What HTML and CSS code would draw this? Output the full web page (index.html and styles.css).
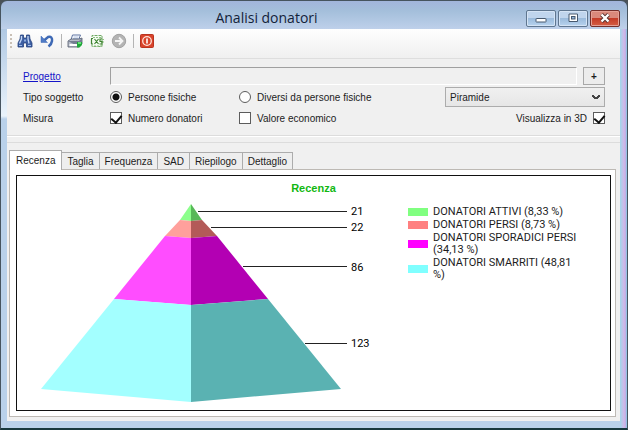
FILE: index.html
```html
<!DOCTYPE html>
<html lang="it">
<head>
  <meta charset="UTF-8" />
  <meta name="viewport" content="width=device-width, initial-scale=1.0" />
  <title>Analisi donatori</title>
  <link rel="stylesheet" href="styles.css">
</head>
<body>
  <div class="finestra">
    <!-- Barra del titolo -->
    <header class="titolo">
      <h1 class="titolo-testo">Analisi donatori</h1>
      <div class="titolo-bottoni">
        <button class="btn-finestra" type="button" aria-label="Riduci a icona">
          <svg width="12" height="10" viewBox="0 0 12 10"><rect x="1" y="5.5" width="10" height="3.5" rx="0.5" fill="#fff" stroke="#46586e"/></svg>
        </button>
        <button class="btn-finestra" type="button" aria-label="Ingrandisci">
          <svg width="12" height="10" viewBox="0 0 12 10"><path d="M2 1h8.500v7.500h-8.500z" fill="#fff" stroke="#46586e"/><rect x="4.500" y="3.500" width="3.500" height="2.500" fill="#8fb2d8" stroke="#46586e"/></svg>
        </button>
        <button class="btn-finestra btn-chiudi" type="button" aria-label="Chiudi">
          <svg width="12" height="10" viewBox="0 0 12 10"><path d="M2.500 1.500l7 7M9.500 1.500l-7 7" stroke="#54302f" stroke-width="4"/><path d="M2.500 1.500l7 7M9.500 1.500l-7 7" stroke="#fff" stroke-width="2.400"/></svg>
        </button>
      </div>
    </header>

    <main class="contenuto">
      <!-- Barra degli strumenti -->
      <div class="strumenti">
        <span class="maniglia"></span>
        <button class="btn-icona" type="button" aria-label="Cerca">
          <svg width="16" height="16" viewBox="0 0 16 16">
            <path d="M3.500 2h3v3h3v-3h3l.5 4 2 4v4h-5.500v-4h-3v4H1v-4l2-4z" fill="#3d5fa3" stroke="#27427d" stroke-width=".8"/>
            <path d="M4.500 3v3l-2 4.500M11 3v3l1 4.500" fill="none" stroke="#c4d7f6" stroke-width="1.300"/>
            <path d="M7 6.500h2v2H7z" fill="#8eabdd"/>
            <path d="M2 12.500h3M11 12.500h3" stroke="#9fbaea"/>
          </svg>
        </button>
        <button class="btn-icona" type="button" aria-label="Annulla">
          <svg width="16" height="16" viewBox="0 0 16 16">
            <path d="M5 7.500L9 4c3-1 4.500 1 4 4-.3 2.500-1.500 4-3.500 5.500" fill="none" stroke="#3e69b5" stroke-width="2.500"/>
            <path d="M2 3v6.500h6.500z" fill="#4f7bc6" stroke="#3e69b5" stroke-width=".5"/>
          </svg>
        </button>
        <span class="separatore"></span>
        <button class="btn-icona" type="button" aria-label="Stampa">
          <svg width="16" height="16" viewBox="0 0 16 16">
            <path d="M5.500 2h8l-2 5H4z" fill="#fff" stroke="#5d73a2"/>
            <path d="M6.500 4h5M6 5.500h5" stroke="#9cb3da" stroke-width=".8"/>
            <path d="M1 8l3-2h8l3-1v6l-3 3H1z" fill="#b7bdc9" stroke="#50586b" stroke-width=".8"/>
            <path d="M1 8h11l3-3v6l-3 3z" fill="#737d90"/>
            <path d="M2.500 11h8v2h-8z" fill="#fff"/>
            <path d="M10 9h5v3l-2.500 2.500H10z" fill="#1fa83a"/>
            <path d="M11 10h3" stroke="#7ff08b" stroke-width="1.500"/>
          </svg>
        </button>
        <button class="btn-icona" type="button" aria-label="Esporta in Excel">
          <svg width="16" height="16" viewBox="0 0 16 16">
            <path d="M3 4V2.500h10V13.500H3V12" fill="#f4fbf1" stroke="#6fa863" stroke-dasharray="3 1"/>
            <path d="M4 4.500h8M5 13h8M13 6.500h2M13 9h2" stroke="#8fbf83" stroke-dasharray="2 1"/>
            <path d="M2.500 6v5M2 5.500h2M2 11h2M5.500 6l4 5M9.500 6l-4 5M13 6h-2v2.500h2V11h-2.500" fill="none" stroke="#3e8431" stroke-width="1.200"/>
          </svg>
        </button>
        <button class="btn-icona" type="button" aria-label="Avanti" disabled>
          <svg width="16" height="16" viewBox="0 0 16 16">
            <circle cx="8" cy="8" r="6.700" fill="#b4b4b4" stroke="#a2a2a2"/>
            <path d="M4 8h7M8 4.500L11.500 8 8 11.500" fill="none" stroke="#f5f5f5" stroke-width="1.800"/>
          </svg>
        </button>
        <span class="separatore"></span>
        <button class="btn-icona" type="button" aria-label="Esci">
          <svg width="16" height="16" viewBox="0 0 16 16">
            <rect x="1.500" y="1.500" width="13" height="13" rx="1" fill="#d9432a" stroke="#b93420"/>
            <circle cx="8" cy="8" r="4.300" fill="#d9432a" stroke="#ffe3da" stroke-width="1.300"/>
            <path d="M8 5.500v5" stroke="#fff" stroke-width="1.600"/>
          </svg>
        </button>
      </div>

      <!-- Filtri -->
      <form class="filtri">
        <a class="link" href="#">Progetto</a>
        <div class="riga-progetto">
          <input class="campo" type="text" aria-label="Progetto" readonly>
          <button class="btn-piu" type="button">+</button>
        </div>

        <span>Tipo soggetto</span>
        <label class="scelta"><input class="radio" type="radio" name="tipo" checked>Persone fisiche</label>
        <label class="scelta"><input class="radio" type="radio" name="tipo">Diversi da persone fisiche</label>
        <select class="tendina" aria-label="Tipo di grafico">
          <option>Piramide</option>
        </select>

        <span>Misura</span>
        <label class="scelta"><input class="spunta" type="checkbox" checked>Numero donatori</label>
        <label class="scelta"><input class="spunta" type="checkbox">Valore economico</label>
        <label class="scelta scelta-destra">Visualizza in 3D<input class="spunta" type="checkbox" checked></label>
      </form>

      <!-- Schede -->
      <section class="schede">
        <div class="linguette" role="tablist">
          <button class="linguetta attiva" type="button" role="tab" aria-selected="true">Recenza</button>
          <button class="linguetta" type="button" role="tab">Taglia</button>
          <button class="linguetta" type="button" role="tab">Frequenza</button>
          <button class="linguetta" type="button" role="tab">SAD</button>
          <button class="linguetta" type="button" role="tab">Riepilogo</button>
          <button class="linguetta" type="button" role="tab">Dettaglio</button>
        </div>
        <div class="pannello">
          <div class="grafico">
            <h2 class="grafico-titolo">Recenza</h2>
            <div class="grafico-corpo">
              <svg class="piramide" width="340" height="204" viewBox="0 0 340 204">
                <polygon points="150,4 139,20 150,21" fill="#8cff8c"/>
                <polygon points="150,4 161,20 150,21" fill="#58b858"/>
                <polygon points="139,20 124,36 150,38 150,21" fill="#ffa09c"/>
                <polygon points="161,20 176,36 150,38 150,21" fill="#b35a58"/>
                <polygon points="124,36 73,99 150,105 150,38" fill="#ff4dff"/>
                <polygon points="176,36 227,99 150,105 150,38" fill="#b300b3"/>
                <polygon points="73,99 0,189 150,202 150,105" fill="#a3ffff"/>
                <polygon points="227,99 300,189 150,202 150,105" fill="#5ab2b2"/>
                <path class="linea" d="M157 11.500h149M170 27.500h136M202 66.500h104M264 143.500h42"/>
                <text x="310" y="15">21</text>
                <text x="310" y="31">22</text>
                <text x="310" y="71">86</text>
                <text x="310" y="147">123</text>
              </svg>
              <ul class="legenda">
                <li><span class="colore attivi"></span>DONATORI ATTIVI (8,33 %)</li>
                <li><span class="colore persi"></span>DONATORI PERSI (8,73 %)</li>
                <li><span class="colore sporadici"></span>DONATORI SPORADICI PERSI (34,13 %)</li>
                <li><span class="colore smarriti"></span>DONATORI SMARRITI (48,81 %)</li>
              </ul>
            </div>
          </div>
        </div>
      </section>
    </main>
  </div>
</body>
</html>
```
FILE: styles.css
```css
* {
  box-sizing: border-box;
  margin: 0;
  padding: 0;
}
body {
  background: #4a5158;
  font-family: "Liberation Sans", Arial, sans-serif;
  font-size: 10px;
  color: #1c1c1c;
}
button, input, select {
  font: inherit;
  color: inherit;
}

/* Finestra */
.finestra {
  display: flex;
  flex-direction: column;
  min-height: 100vh;
  padding: 1px 7px 7px 6px;
  border: 1px solid #46545f;
  border-bottom: 2px solid #17383d;
  border-radius: 7px 7px 0 0;
  background:
    linear-gradient(#a2b5dc, #a4bfdb 10px, #bed0ea 28px) top / 100% 28px no-repeat,
    linear-gradient(90deg, #a0d8ea, #d2b8e8 4px, #bcaee4 6px, #70d8e4) right / 7px 100% no-repeat,
    linear-gradient(#9dbbdc, #eaf3fb 115px, #b9d1ea 118px);
}
.titolo {
  display: flex;
  align-items: center;
  height: 27px;
  flex: none;
}
.titolo-testo {
  flex: 1;
  padding-top: 5px;
  text-align: center;
  font: 14px/18px "Open Sans", "Noto Sans", sans-serif;
  color: #13233a;
}
.titolo-bottoni {
  display: flex;
  gap: 2px;
  padding-top: 5px;
}
.btn-finestra {
  display: flex;
  align-items: center;
  justify-content: center;
  width: 30px;
  height: 17px;
  border: 1px solid #5f7690;
  border-radius: 2px;
  box-shadow: inset 0 0 0 1px #d5e4f5;
  background: linear-gradient(#c0d5ed 50%, #9bbbdc 50%, #b8d3ee);
}
.btn-chiudi {
  border-color: #742f2b;
  box-shadow: inset 0 0 0 1px #e5a196;
  background: linear-gradient(#d9897c 50%, #c43c28 50%, #d55e45);
}
.contenuto {
  display: flex;
  flex-direction: column;
  flex: 1;
  background: #f0f0f0;
}

/* Strumenti */
.strumenti {
  display: flex;
  align-items: center;
  height: 30px;
  padding: 0 3px 5px;
  border-bottom: 1px solid #dedede;
  background: linear-gradient(#fefefe, #f0f0f0);
}
.maniglia {
  width: 2px;
  height: 14px;
  margin-right: 5px;
  background: repeating-linear-gradient(#c9c0b6 0, #c9c0b6 2px, transparent 2px, transparent 4px);
}
.btn-icona {
  display: flex;
  margin-right: 6px;
  border: none;
  background: none;
}
.separatore {
  width: 1px;
  height: 14px;
  margin-right: 5px;
  background: #b4b4b4;
}

/* Filtri */
.filtri {
  display: grid;
  grid-template-columns: 87px 129px 1fr 160px;
  grid-auto-rows: 20px;
  row-gap: 1px;
  align-items: center;
  padding: 7px 15px 7px 16px;
  border-bottom: 1px solid #dcdcdc;
  box-shadow: 0 1px 0 #fff;
}
.link {
  color: #1414c8;
}
.riga-progetto {
  grid-column: 2 / 5;
  display: flex;
  align-items: center;
  gap: 6px;
}
.campo {
  flex: 1;
  height: 18px;
  border: 1px solid #fff;
  border-top-color: #a0a0a0;
  border-left-color: #a0a0a0;
  background: #f0f0f0;
}
.btn-piu {
  width: 22px;
  height: 18px;
  border: 1px solid #a8a8a8;
  background: #ececec;
  font-weight: bold;
}
.scelta {
  display: flex;
  align-items: center;
  gap: 6px;
}
.scelta-destra {
  justify-content: flex-end;
}
.radio, .spunta {
  appearance: none;
  width: 12px;
  height: 12px;
  border: 1px solid #5c5c5c;
  background: #fff;
}
.radio {
  border-radius: 50%;
}
.radio:checked {
  background: radial-gradient(circle, #111 3px, #fff 4px);
}
.spunta {
  display: flex;
  justify-content: center;
}
.spunta:checked::after {
  content: "";
  width: 5px;
  height: 8px;
  border: solid #111;
  border-width: 0 2px 2px 0;
  transform: rotate(40deg);
}
.tendina {
  appearance: none;
  height: 20px;
  padding: 0 4px;
  border: 1px solid #acacac;
  background:
    linear-gradient(45deg, transparent 36%, #444 36%, #444 64%, transparent 64%) right 8px center / 4px 4px no-repeat,
    linear-gradient(-45deg, transparent 36%, #444 36%, #444 64%, transparent 64%) right 4px center / 4px 4px no-repeat,
    linear-gradient(#f0f0f0, #e6e6e6);
}

/* Schede */
.schede {
  display: flex;
  flex-direction: column;
  flex: 1;
  margin-top: 6px;
  padding: 7px 4px 4px 2px;
  border-top: 1px solid #dcdcdc;
}
.linguette {
  display: flex;
  align-items: flex-end;
  height: 19px;
}
.linguetta {
  height: 17px;
  padding: 0 5px;
  border: 1px solid #acacac;
  border-left: none;
  border-bottom: none;
  background: #eee;
}
.linguetta.attiva {
  height: 20px;
  margin-bottom: -1px;
  padding: 0 6px;
  border-left: 1px solid #acacac;
  background: #fff;
  z-index: 1;
}
.pannello {
  display: flex;
  flex: 1;
  padding: 5px 4px 5px 6px;
  border: 1px solid #bdb9b4;
  background: #fff;
}

/* Grafico */
.grafico {
  flex: 1;
  border: 1px solid #111;
  font: 11px/12px Roboto, "Liberation Sans", sans-serif;
}
.grafico-titolo {
  padding-top: 6px;
  text-align: center;
  font: bold 11px/12px "Liberation Sans", Arial, sans-serif;
  color: #12b812;
}
.grafico-corpo {
  display: flex;
  align-items: flex-start;
  gap: 27px;
  padding: 6px 24px 0;
}
.piramide {
  flex: none;
}
.linea {
  stroke: #222;
  stroke-width: 1;
}
.legenda {
  display: flex;
  flex-direction: column;
  gap: 1px;
  width: 176px;
  padding-top: 6px;
  list-style: none;
}
.legenda li {
  display: flex;
  align-items: center;
  gap: 5px;
}
.colore {
  flex: none;
  width: 20px;
  height: 8px;
}
.attivi {
  background: #80ff80;
}
.persi {
  background: #ff8080;
}
.sporadici {
  background: #f0f;
}
.smarriti {
  background: #80ffff;
}
```
